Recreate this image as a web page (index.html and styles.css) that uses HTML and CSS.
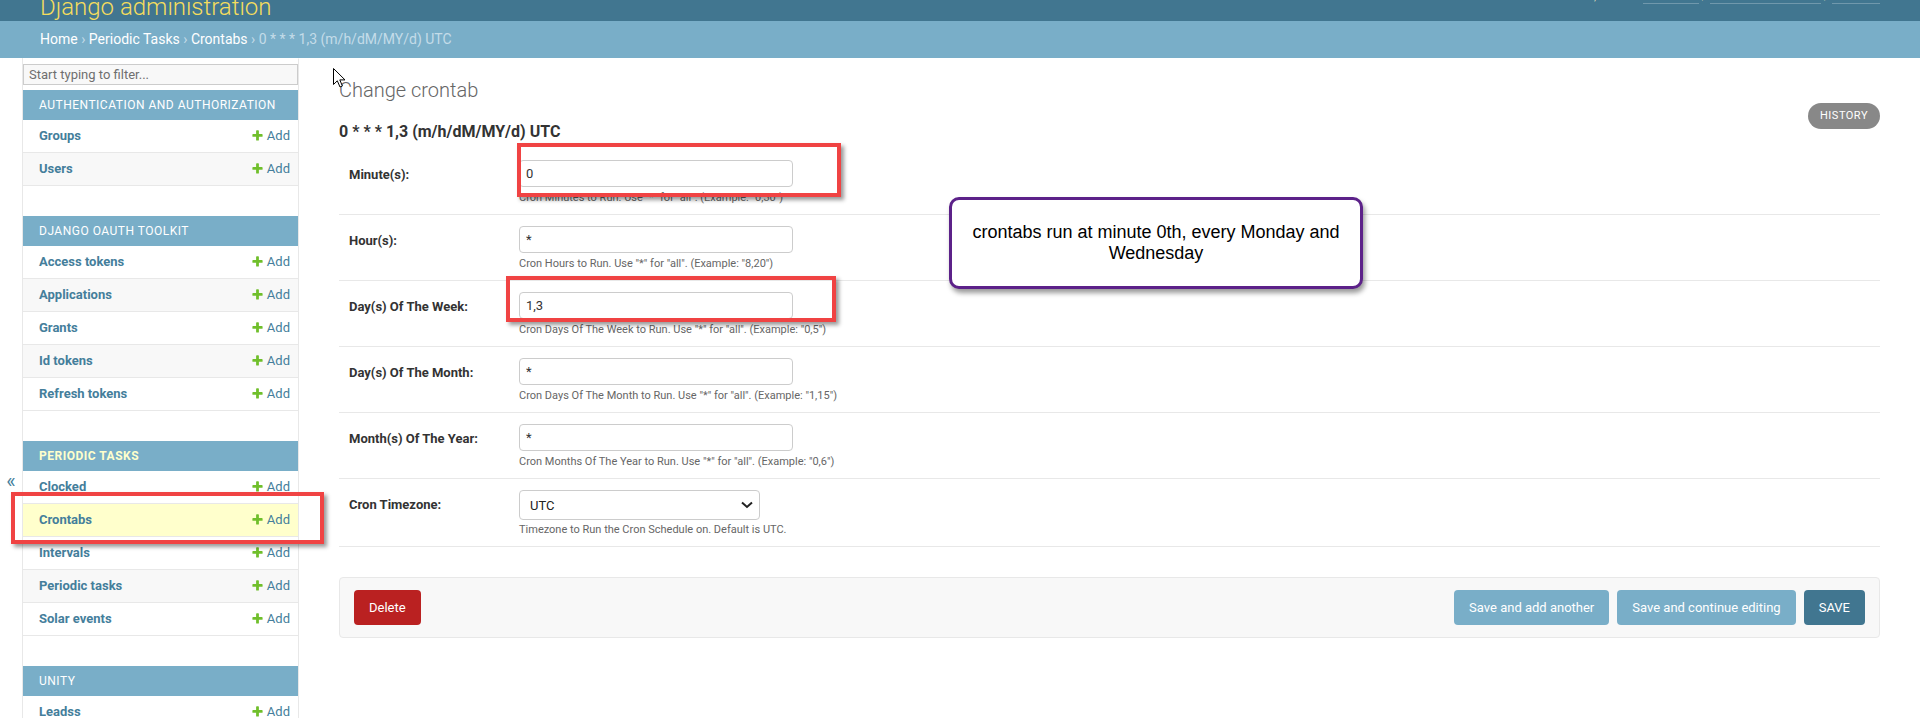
FILE: index.html
```html
<!DOCTYPE html>
<html lang="en">
<head>
<meta charset="utf-8">
<title>Change crontab | Django site admin</title>
<link rel="stylesheet" href="styles.css">
</head>
<body>
<div class="header-clip">
  <header class="header">
    <div class="branding"><h1 class="site-name"><a href="#">Django administration</a></h1></div>
    <div class="user-tools">Welcome, <strong>admin</strong>. <a href="#">View site</a> / <a href="#">Change password</a> / <a href="#">Log out</a></div>
  </header>
</div>
<nav class="breadcrumbs"><a href="#">Home</a> › <a href="#">Periodic Tasks</a> › <a href="#">Crontabs</a> › 0 * * * 1,3 (m/h/dM/MY/d) UTC</nav>

<div class="main">
  <button class="toggle-nav" type="button">«</button>
  <nav class="sidebar">
    <input class="nav-filter" type="text" placeholder="Start typing to filter...">

    <div class="module">
      <div class="caption"><a href="#">Authentication and Authorization</a></div>
      <div class="model-row"><a class="model" href="#">Groups</a><a class="addlink" href="#"><svg class="add-icon" viewBox="0 0 1792 1792"><path d="M1600 796v192q0 40-28 68t-68 28h-416v416q0 40-28 68t-68 28h-192q-40 0-68-28t-28-68v-416h-416q-40 0-68-28t-28-68v-192q0-40 28-68t68-28h416v-416q0-40 28-68t68-28h192q40 0 68 28t28 68v416h416q40 0 68 28t28 68z"/></svg>Add</a></div>
      <div class="model-row"><a class="model" href="#">Users</a><a class="addlink" href="#"><svg class="add-icon" viewBox="0 0 1792 1792"><path d="M1600 796v192q0 40-28 68t-68 28h-416v416q0 40-28 68t-68 28h-192q-40 0-68-28t-28-68v-416h-416q-40 0-68-28t-28-68v-192q0-40 28-68t68-28h416v-416q0-40 28-68t68-28h192q40 0 68 28t28 68v416h416q40 0 68 28t28 68z"/></svg>Add</a></div>
    </div>

    <div class="module">
      <div class="caption"><a href="#">Django OAuth Toolkit</a></div>
      <div class="model-row"><a class="model" href="#">Access tokens</a><a class="addlink" href="#"><svg class="add-icon" viewBox="0 0 1792 1792"><path d="M1600 796v192q0 40-28 68t-68 28h-416v416q0 40-28 68t-68 28h-192q-40 0-68-28t-28-68v-416h-416q-40 0-68-28t-28-68v-192q0-40 28-68t68-28h416v-416q0-40 28-68t68-28h192q40 0 68 28t28 68v416h416q40 0 68 28t28 68z"/></svg>Add</a></div>
      <div class="model-row"><a class="model" href="#">Applications</a><a class="addlink" href="#"><svg class="add-icon" viewBox="0 0 1792 1792"><path d="M1600 796v192q0 40-28 68t-68 28h-416v416q0 40-28 68t-68 28h-192q-40 0-68-28t-28-68v-416h-416q-40 0-68-28t-28-68v-192q0-40 28-68t68-28h416v-416q0-40 28-68t68-28h192q40 0 68 28t28 68v416h416q40 0 68 28t28 68z"/></svg>Add</a></div>
      <div class="model-row"><a class="model" href="#">Grants</a><a class="addlink" href="#"><svg class="add-icon" viewBox="0 0 1792 1792"><path d="M1600 796v192q0 40-28 68t-68 28h-416v416q0 40-28 68t-68 28h-192q-40 0-68-28t-28-68v-416h-416q-40 0-68-28t-28-68v-192q0-40 28-68t68-28h416v-416q0-40 28-68t68-28h192q40 0 68 28t28 68v416h416q40 0 68 28t28 68z"/></svg>Add</a></div>
      <div class="model-row"><a class="model" href="#">Id tokens</a><a class="addlink" href="#"><svg class="add-icon" viewBox="0 0 1792 1792"><path d="M1600 796v192q0 40-28 68t-68 28h-416v416q0 40-28 68t-68 28h-192q-40 0-68-28t-28-68v-416h-416q-40 0-68-28t-28-68v-192q0-40 28-68t68-28h416v-416q0-40 28-68t68-28h192q40 0 68 28t28 68v416h416q40 0 68 28t28 68z"/></svg>Add</a></div>
      <div class="model-row"><a class="model" href="#">Refresh tokens</a><a class="addlink" href="#"><svg class="add-icon" viewBox="0 0 1792 1792"><path d="M1600 796v192q0 40-28 68t-68 28h-416v416q0 40-28 68t-68 28h-192q-40 0-68-28t-28-68v-416h-416q-40 0-68-28t-28-68v-192q0-40 28-68t68-28h416v-416q0-40 28-68t68-28h192q40 0 68 28t28 68v416h416q40 0 68 28t28 68z"/></svg>Add</a></div>
    </div>

    <div class="module current-app">
      <div class="caption"><a href="#">Periodic Tasks</a></div>
      <div class="model-row"><a class="model" href="#">Clocked</a><a class="addlink" href="#"><svg class="add-icon" viewBox="0 0 1792 1792"><path d="M1600 796v192q0 40-28 68t-68 28h-416v416q0 40-28 68t-68 28h-192q-40 0-68-28t-28-68v-416h-416q-40 0-68-28t-28-68v-192q0-40 28-68t68-28h416v-416q0-40 28-68t68-28h192q40 0 68 28t28 68v416h416q40 0 68 28t28 68z"/></svg>Add</a></div>
      <div class="model-row current-model"><a class="model" href="#">Crontabs</a><a class="addlink" href="#"><svg class="add-icon" viewBox="0 0 1792 1792"><path d="M1600 796v192q0 40-28 68t-68 28h-416v416q0 40-28 68t-68 28h-192q-40 0-68-28t-28-68v-416h-416q-40 0-68-28t-28-68v-192q0-40 28-68t68-28h416v-416q0-40 28-68t68-28h192q40 0 68 28t28 68v416h416q40 0 68 28t28 68z"/></svg>Add</a></div>
      <div class="model-row"><a class="model" href="#">Intervals</a><a class="addlink" href="#"><svg class="add-icon" viewBox="0 0 1792 1792"><path d="M1600 796v192q0 40-28 68t-68 28h-416v416q0 40-28 68t-68 28h-192q-40 0-68-28t-28-68v-416h-416q-40 0-68-28t-28-68v-192q0-40 28-68t68-28h416v-416q0-40 28-68t68-28h192q40 0 68 28t28 68v416h416q40 0 68 28t28 68z"/></svg>Add</a></div>
      <div class="model-row"><a class="model" href="#">Periodic tasks</a><a class="addlink" href="#"><svg class="add-icon" viewBox="0 0 1792 1792"><path d="M1600 796v192q0 40-28 68t-68 28h-416v416q0 40-28 68t-68 28h-192q-40 0-68-28t-28-68v-416h-416q-40 0-68-28t-28-68v-192q0-40 28-68t68-28h416v-416q0-40 28-68t68-28h192q40 0 68 28t28 68v416h416q40 0 68 28t28 68z"/></svg>Add</a></div>
      <div class="model-row"><a class="model" href="#">Solar events</a><a class="addlink" href="#"><svg class="add-icon" viewBox="0 0 1792 1792"><path d="M1600 796v192q0 40-28 68t-68 28h-416v416q0 40-28 68t-68 28h-192q-40 0-68-28t-28-68v-416h-416q-40 0-68-28t-28-68v-192q0-40 28-68t68-28h416v-416q0-40 28-68t68-28h192q40 0 68 28t28 68v416h416q40 0 68 28t28 68z"/></svg>Add</a></div>
    </div>

    <div class="module">
      <div class="caption"><a href="#">Unity</a></div>
      <div class="model-row"><a class="model" href="#">Leadss</a><a class="addlink" href="#"><svg class="add-icon" viewBox="0 0 1792 1792"><path d="M1600 796v192q0 40-28 68t-68 28h-416v416q0 40-28 68t-68 28h-192q-40 0-68-28t-28-68v-416h-416q-40 0-68-28t-28-68v-192q0-40 28-68t68-28h416v-416q0-40 28-68t68-28h192q40 0 68 28t28 68v416h416q40 0 68 28t28 68z"/></svg>Add</a></div>
    </div>
  </nav>

  <div class="content">
    <h1 class="title">Change crontab</h1>
    <h2 class="subtitle">0 * * * 1,3 (m/h/dM/MY/d) UTC</h2>
    <div class="content-main">
      <ul class="object-tools"><li><a href="#">History</a></li></ul>
      <form>
        <fieldset class="aligned">
          <div class="form-row">
            <div class="flex-container"><label>Minute(s):</label><input class="vTextField" type="text" value="0"></div>
            <div class="help">Cron Minutes to Run. Use "*" for "all". (Example: "0,30")</div>
          </div>
          <div class="form-row">
            <div class="flex-container"><label>Hour(s):</label><input class="vTextField" type="text" value="*"></div>
            <div class="help">Cron Hours to Run. Use "*" for "all". (Example: "8,20")</div>
          </div>
          <div class="form-row">
            <div class="flex-container"><label>Day(s) Of The Week:</label><input class="vTextField" type="text" value="1,3"></div>
            <div class="help">Cron Days Of The Week to Run. Use "*" for "all". (Example: "0,5")</div>
          </div>
          <div class="form-row">
            <div class="flex-container"><label>Day(s) Of The Month:</label><input class="vTextField" type="text" value="*"></div>
            <div class="help">Cron Days Of The Month to Run. Use "*" for "all". (Example: "1,15")</div>
          </div>
          <div class="form-row">
            <div class="flex-container"><label>Month(s) Of The Year:</label><input class="vTextField" type="text" value="*"></div>
            <div class="help">Cron Months Of The Year to Run. Use "*" for "all". (Example: "0,6")</div>
          </div>
          <div class="form-row">
            <div class="flex-container"><label>Cron Timezone:</label>
              <div class="select"><span>UTC</span><svg class="chevron" viewBox="0 0 12 8"><path d="M1 1.5 L6 6 L11 1.5"/></svg></div>
            </div>
            <div class="help">Timezone to Run the Cron Schedule on. Default is UTC.</div>
          </div>
        </fieldset>
        <div class="submit-row">
          <a class="deletelink" href="#">Delete</a>
          <button class="button" type="button">Save and add another</button>
          <button class="button" type="button">Save and continue editing</button>
          <button class="button default" type="button">SAVE</button>
        </div>
      </form>
    </div>
  </div>
</div>

<div class="mark mark-minute"></div>
<div class="mark mark-dow"></div>
<div class="mark mark-crontabs"></div>
<div class="callout">crontabs run at minute 0th, every Monday and Wednesday</div>
<svg class="cursor" viewBox="0 0 13 20"><path d="M0.5 0.5 L0.5 16.5 L4.3 12.8 L7 19 L9.4 18 L6.8 11.9 L12 11.9 Z"/></svg>
</body>
</html>
```
FILE: styles.css
```css
* { box-sizing: border-box; }
html, body { margin: 0; padding: 0; }
body {
  position: relative;
  width: 1920px;
  height: 718px;
  overflow: hidden;
  font-family: Roboto, "Liberation Sans", Arial, sans-serif;
  font-size: 14px;
  color: #333;
  background: #fff;
}
a { color: #447e9b; text-decoration: none; }

/* header (page is scrolled, only the bottom of it shows) */
.header-clip { height: 21px; overflow: hidden; background: #417690; }
.header {
  display: flex;
  justify-content: space-between;
  align-items: flex-end;
  height: 60px;
  margin-top: -39px;
  padding: 0 40px;
  color: #ffc;
}
.site-name { margin: 0; font-size: 24px; line-height: 28px; font-weight: 300; }
.site-name a { color: #f5dd5d; }
.user-tools {
  margin-bottom: 18px;
  font-size: 11px;
  line-height: 13px;
  font-weight: 300;
  letter-spacing: .5px;
  text-transform: uppercase;
}
.user-tools a { color: #fff; border-bottom: 1px solid rgba(255,255,255,.25); }

.breadcrumbs {
  background: #79aec8;
  padding: 10px 40px;
  font-size: 14px;
  line-height: 17px;
  color: #c4dce8;
}
.breadcrumbs a { color: #fff; }

/* main */
.main { display: flex; height: 660px; overflow: hidden; }
.toggle-nav {
  flex: 0 0 23px;
  display: flex;
  justify-content: center;
  align-items: flex-start;
  padding: 412px 0 0;
  margin: 0;
  border: 0;
  border-right: 1px solid #e8e8e8;
  background: #fff;
  color: #447e9b;
  font-family: Roboto, sans-serif;
  font-size: 20px;
  line-height: 23px;
}
.sidebar {
  flex: 0 0 276px;
  border-top: 1px solid transparent;
  border-right: 1px solid #e8e8e8;
  overflow: hidden;
}
.nav-filter {
  display: block;
  width: 100%;
  margin: 5px 0;
  padding: 2px 5px;
  border: 1px solid #ccc;
  background: #f8f8f8;
  font-family: Roboto, sans-serif;
  font-size: 13px;
  line-height: 15px;
  color: #333;
}
.nav-filter::placeholder { color: #6f6f6f; }
.module { margin-bottom: 30px; }
.caption {
  padding: 8px 8px 8px 16px;
  background: #79aec8;
  font-size: 12px;
  line-height: 14px;
  letter-spacing: .5px;
  text-transform: uppercase;
}
.caption a { color: #fff; }
.current-app .caption a { color: #ffc; font-weight: bold; }
.model-row {
  display: flex;
  justify-content: space-between;
  padding: 8px 8px 8px 16px;
  font-size: 13px;
  line-height: 16px;
  border-bottom: 1px solid #e8e8e8;
  background: #fff;
}
.model-row:nth-child(odd) { background: #f8f8f8; }
.model-row.current-model { background: #ffc; }
.model { font-weight: bold; }
.addlink { white-space: nowrap; }
.add-icon {
  display: inline-block;
  vertical-align: top;
  width: 13px;
  height: 13px;
  margin: 1px 3px 0 0;
  fill: #70bf2b;
}

/* content */
.content { flex: 1 1 auto; min-width: 0; padding: 20px 40px; }
.title { margin: 0 0 20px; font-size: 20px; font-weight: 300; color: #666; }
.subtitle { margin: 20px 0 8px; font-size: 16px; font-weight: bold; color: #333; }
.object-tools { float: right; list-style: none; margin: -46px 0 0; padding: 0; }
.object-tools a {
  display: block;
  padding: 3px 12px;
  background: #888;
  color: #fff;
  font-size: 11px;
  line-height: 20px;
  letter-spacing: .5px;
  text-transform: uppercase;
  border-radius: 15px;
}
.aligned { margin: 0 0 30px; padding: 0; border: 0; min-width: 0; }
.form-row { padding: 10px; font-size: 13px; border-bottom: 1px solid #e8e8e8; }
.flex-container { display: flex; align-items: flex-start; }
.form-row label {
  display: block;
  flex: 0 0 170px;
  padding: 4px 10px 0 0;
  font-weight: bold;
  color: #333;
}
.form-row label::after { content: ''; display: inline-block; vertical-align: middle; height: 26px; }
.vTextField {
  width: 274px;
  height: 27px;
  margin: 1px 0 1px;
  padding: 5px 6px;
  border: 1px solid #ccc;
  border-radius: 4px;
  font-family: Roboto, sans-serif;
  font-size: 13px;
  color: #333;
  background: #fff;
}
.select {
  display: flex;
  align-items: center;
  justify-content: space-between;
  width: 241px;
  height: 30px;
  margin: 1px 0 1px;
  padding: 0 6px 0 10px;
  border: 1px solid #ccc;
  border-radius: 4px;
  font-size: 13px;
  color: #222;
}
.chevron { width: 12px; height: 8px; fill: none; stroke: #222; stroke-width: 2; }
.help { margin: 2px 0 0 170px; font-size: 11px; line-height: 13px; color: #666; }

.submit-row {
  display: flex;
  gap: 8px;
  padding: 12px 14px;
  margin: 0 0 20px;
  border: 1px solid #e8e8e8;
  border-radius: 4px;
  background: #f8f8f8;
}
.deletelink {
  display: block;
  margin-right: auto;
  height: 35px;
  padding: 10px 15px;
  line-height: 15px;
  font-size: 13px;
  background: #ba2121;
  color: #fff;
  border-radius: 4px;
}
.button {
  height: 35px;
  padding: 10px 15px;
  border: 0;
  border-radius: 4px;
  background: #79aec8;
  color: #fff;
  font-family: Roboto, sans-serif;
  font-size: 13px;
  line-height: 15px;
}
.button.default { background: #417690; }

/* screenshot annotations laid over the page */
.mark {
  position: absolute;
  border: 4px solid #f04343;
  box-shadow: 3px 3px 4px rgba(0,0,0,.4);
}
.mark-minute { left: 517px; top: 143px; width: 324px; height: 54px; }
.mark-dow { left: 506px; top: 276px; width: 330px; height: 46px; }
.mark-crontabs { left: 11px; top: 492px; width: 313px; height: 52px; }
.callout {
  position: absolute;
  left: 949px;
  top: 197px;
  width: 414px;
  height: 92px;
  display: flex;
  align-items: center;
  justify-content: center;
  padding: 0 16px;
  border: 3px solid #5c2189;
  border-radius: 10px;
  background: #fff;
  box-shadow: 2px 4px 5px rgba(0,0,0,.4);
  font-family: "Liberation Sans", Arial, sans-serif;
  font-size: 18px;
  text-align: center;
  color: #000;
}
.cursor {
  position: absolute;
  left: 333px;
  top: 68px;
  width: 13px;
  height: 20px;
  fill: #fff;
  stroke: #000;
  stroke-width: 1;
}
```
